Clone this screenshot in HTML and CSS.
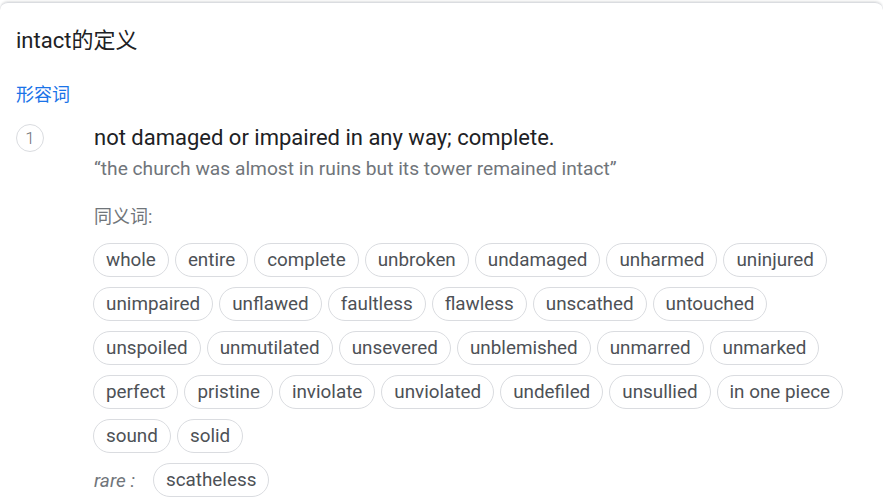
FILE: index.html
```html
<!DOCTYPE html>
<html lang="zh">
<head>
<meta charset="utf-8">
<link rel="stylesheet" href="styles.css">
</head>
<body>
<div class="card">
  <h2 class="title">intact的定义</h2>
  <div class="pos">形容词</div>
  <div class="sense">
    <div class="num">1</div>
    <div class="body">
      <div class="def">not damaged or impaired in any way; complete.</div>
      <div class="example">“the church was almost in ruins but its tower remained intact”</div>
      <div class="syn-label">同义词:</div>
      <div class="chips">
        <span class="chip">whole</span><span class="chip">entire</span><span class="chip">complete</span><span class="chip">unbroken</span><span class="chip">undamaged</span><span class="chip">unharmed</span><span class="chip">uninjured</span><span class="chip">unimpaired</span><span class="chip">unflawed</span><span class="chip">faultless</span><span class="chip">flawless</span><span class="chip">unscathed</span><span class="chip">untouched</span><span class="chip">unspoiled</span><span class="chip">unmutilated</span><span class="chip">unsevered</span><span class="chip">unblemished</span><span class="chip">unmarred</span><span class="chip">unmarked</span><span class="chip">perfect</span><span class="chip">pristine</span><span class="chip">inviolate</span><span class="chip">unviolated</span><span class="chip">undefiled</span><span class="chip">unsullied</span><span class="chip">in one piece</span><span class="chip">sound</span><span class="chip">solid</span>
      </div>
      <div class="rare">
        <span class="rare-label">rare :</span><span class="chip">scatheless</span>
      </div>
    </div>
  </div>
</div>
</body>
</html>
```
FILE: styles.css
```css
html, body {
  margin: 0;
  padding: 0;
  background: #fff;
}
body {
  font-family: Roboto, "Noto Sans CJK SC", Arial, sans-serif;
  padding-top: 2px;
}
.card {
  border-top: 1px solid #dadce0;
  border-radius: 8px 8px 0 0;
  padding: 0 16px;
  box-shadow: 0 -1px 2px rgba(60,64,67,0.15);
}
.title {
  margin: 0;
  padding-top: 24px;
  font-size: 22px;
  font-weight: 400;
  line-height: 28px;
  color: #202124;
}
.pos {
  margin-top: 28px;
  font-size: 18px;
  line-height: 24px;
  color: #1a73e8;
}
.sense {
  display: flex;
  margin-top: 17px;
}
.num {
  flex: none;
  width: 28px;
  height: 28px;
  border: 1px solid #dadce0;
  border-radius: 50%;
  box-sizing: border-box;
  display: flex;
  align-items: center;
  justify-content: center;
  font-size: 17px;
  font-weight: 300;
  color: #70757a;
  margin-right: 50px;
}
.body {
  flex: 1;
  min-width: 0;
}
.def {
  font-size: 22px;
  line-height: 28px;
  color: #202124;
}
.example {
  font-size: 19.2px;
  line-height: 26px;
  color: #70757a;
  margin-top: 4px;
}
.syn-label {
  margin-top: 23px;
  font-size: 18px;
  line-height: 24px;
  color: #70757a;
}
.chips {
  display: flex;
  flex-wrap: wrap;
  gap: 10px 6px;
  margin-top: 14px;
  margin-left: -1px;
}
.chip {
  display: inline-flex;
  align-items: center;
  height: 34px;
  box-sizing: border-box;
  padding: 0 12px;
  border: 1px solid #dadce0;
  border-radius: 17px;
  font-size: 18.85px;
  color: #4d5156;
  white-space: nowrap;
}
.rare {
  display: flex;
  align-items: center;
  margin-top: 10px;
}
.rare-label {
  font-style: italic;
  font-size: 19px;
  color: #70757a;
  margin-right: 18px;
}
```
